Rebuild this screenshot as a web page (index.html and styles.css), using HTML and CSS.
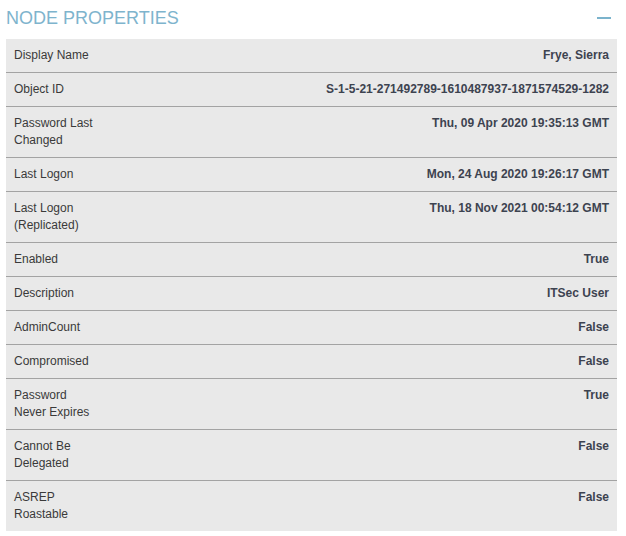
FILE: index.html
```html
<!DOCTYPE html>
<html>
<head>
<meta charset="utf-8">
<link rel="stylesheet" href="styles.css">
</head>
<body>
<div class="panel">
  <div class="header">
    <span class="title">NODE PROPERTIES</span>
    <span class="collapse"></span>
  </div>
  <div class="props">
    <div class="row"><div class="label">Display Name</div><div class="value">Frye, Sierra</div></div>
    <div class="row"><div class="label">Object ID</div><div class="value">S-1-5-21-271492789-1610487937-1871574529-1282</div></div>
    <div class="row"><div class="label">Password Last Changed</div><div class="value">Thu, 09 Apr 2020 19:35:13 GMT</div></div>
    <div class="row"><div class="label">Last Logon</div><div class="value">Mon, 24 Aug 2020 19:26:17 GMT</div></div>
    <div class="row"><div class="label">Last Logon (Replicated)</div><div class="value">Thu, 18 Nov 2021 00:54:12 GMT</div></div>
    <div class="row"><div class="label">Enabled</div><div class="value">True</div></div>
    <div class="row"><div class="label">Description</div><div class="value">ITSec User</div></div>
    <div class="row"><div class="label">AdminCount</div><div class="value">False</div></div>
    <div class="row"><div class="label">Compromised</div><div class="value">False</div></div>
    <div class="row"><div class="label">Password Never Expires</div><div class="value">True</div></div>
    <div class="row"><div class="label">Cannot Be Delegated</div><div class="value">False</div></div>
    <div class="row"><div class="label">ASREP Roastable</div><div class="value">False</div></div>
  </div>
</div>
</body>
</html>
```

FILE: styles.css
```css
html, body {
  margin: 0;
  padding: 0;
  background: #ffffff;
}
body {
  font-family: "Liberation Sans", Arial, sans-serif;
}
.panel {
  width: 611px;
  margin-left: 6px;
}
.header {
  display: flex;
  align-items: center;
  justify-content: space-between;
  height: 20px;
  margin-top: 8px;
  margin-bottom: 11px;
  padding-right: 6px;
}
.title {
  font-size: 18px;
  line-height: 20px;
  color: #7eb4cd;
}
.collapse {
  display: block;
  width: 14px;
  height: 2px;
  background: #7bb3cc;
  margin-top: -1px;
}
.props {
  background: #e9e9e9;
}
.row {
  display: flex;
  justify-content: space-between;
  align-items: flex-start;
  padding: 8px;
  font-size: 12px;
  line-height: 17px;
  border-bottom: 1px solid #a3a3a3;
}
.row:last-child {
  border-bottom: none;
}
.label {
  width: 84px;
  flex: none;
  color: #3a3a3a;
}
.value {
  text-align: right;
  font-weight: bold;
  color: #3d4350;
}
```
